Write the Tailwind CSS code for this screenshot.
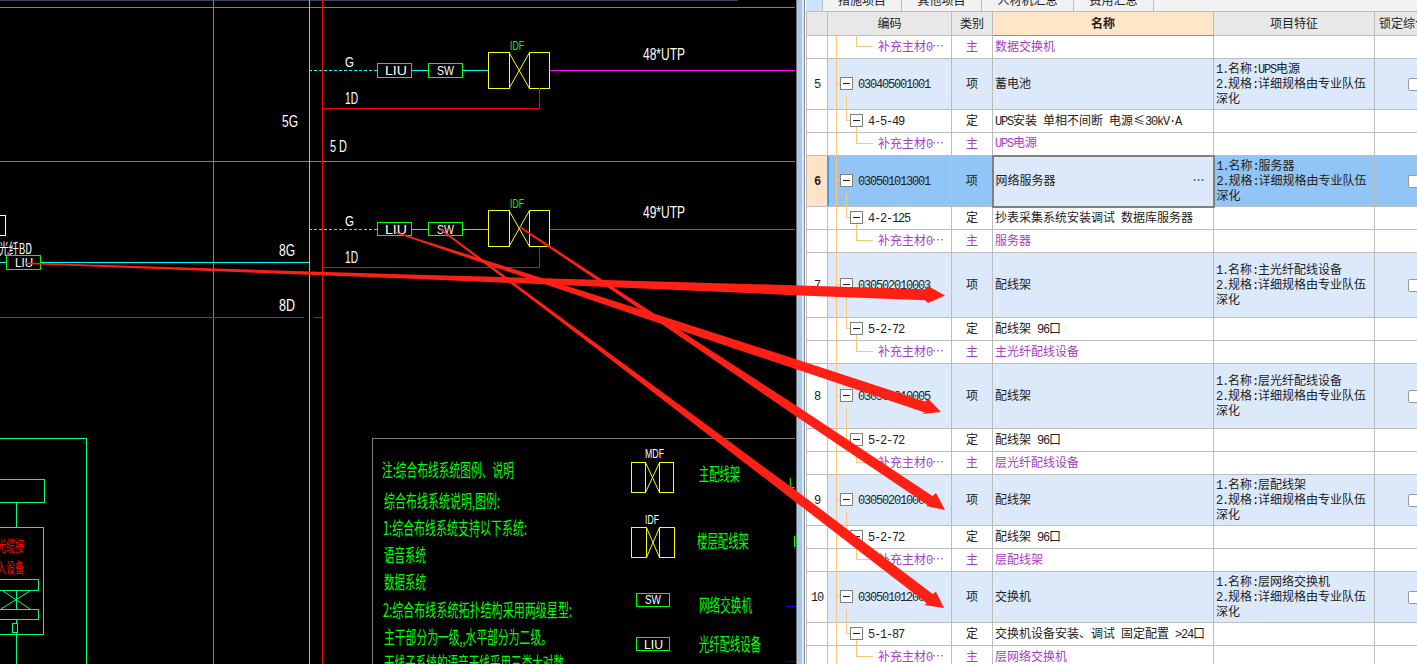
<!DOCTYPE html>
<html lang="zh-CN">
<head>
  <meta charset="UTF-8">
  <title>综合布线 - 清单</title>
  <script src="https://cdn.jsdelivr.net/npm/@tailwindcss/browser@4"></script>
</head>
<body class="relative w-[1417px] h-[664px] overflow-hidden bg-white flex font-['Noto_Sans_CJK_SC',sans-serif] text-[12px] text-[#222]">

  <!-- CAD drawing -->
  <svg class="w-[796px] h-[664px] shrink-0 bg-black" viewBox="0 0 796 664" fill="none" shape-rendering="crispEdges">
    <defs>
      <g id="idf" stroke="#ffff00">
        <rect x="488.5" y="0.5" width="20.5" height="36"/>
        <rect x="529.5" y="0.5" width="20" height="36"/>
        <path d="M509 0.5 529.5 36.5M529.5 0.5 509 36.5" shape-rendering="auto"/>
      </g>
    </defs>

    <!-- frame lines -->
    <path d="M0 0.5H738" stroke="#334466"/>
    <path d="M0 7.5H795M0 161.5H795M213.5 0V664" stroke="#808080"/>
    <path d="M309.5 0V664M0 262.5H309" stroke="#00ffff"/>
    <path d="M322.5 0V664M0 317.5H304M314 317.5H322" stroke="#ff0000"/>

    <!-- floor 5 -->
    <path d="M309 70.5H377" stroke="#00ffff" stroke-dasharray="3 2"/>
    <path d="M411 70.5H428M462 70.5H488" stroke="#00ffff"/>
    <rect x="377.5" y="63.5" width="34" height="14" stroke="#00ff00"/>
    <rect x="428.5" y="63.5" width="34" height="14" stroke="#00ff00"/>
    <use href="#idf" y="52"/>
    <path d="M550 70.5H795" stroke="#ff00ff"/>
    <path d="M323 108.5H539.5V88" stroke="#ff0000"/>

    <!-- floor 8 -->
    <path d="M309 229.5H377" stroke="#00ffff" stroke-dasharray="3 2"/>
    <path d="M411 229.5H428M462 229.5H488" stroke="#00ffff"/>
    <rect x="377.5" y="222.5" width="34" height="13" stroke="#00ff00"/>
    <rect x="428.5" y="222.5" width="34" height="13" stroke="#00ff00"/>
    <use href="#idf" y="210"/>
    <path d="M550 229.5H795" stroke="#ff00ff"/>
    <path d="M323 267.5H539.5V247" stroke="#ff0000"/>

    <g fill="#ffffff" class="font-['Liberation_Sans',sans-serif]">
      <text x="345" y="67" font-size="15" textLength="9" lengthAdjust="spacingAndGlyphs">G</text>
      <text x="345" y="104" font-size="16" textLength="13" lengthAdjust="spacingAndGlyphs">1D</text>
      <text x="282" y="127" font-size="16" textLength="16" lengthAdjust="spacingAndGlyphs">5G</text>
      <text x="330" y="152" font-size="16" textLength="17" lengthAdjust="spacingAndGlyphs">5 D</text>
      <text x="643" y="60" font-size="17" textLength="42" lengthAdjust="spacingAndGlyphs">48*UTP</text>
      <text x="345" y="226" font-size="15" textLength="9" lengthAdjust="spacingAndGlyphs">G</text>
      <text x="345" y="263" font-size="16" textLength="13" lengthAdjust="spacingAndGlyphs">1D</text>
      <text x="279" y="256" font-size="16" textLength="16" lengthAdjust="spacingAndGlyphs">8G</text>
      <text x="279" y="311" font-size="16" textLength="16" lengthAdjust="spacingAndGlyphs">8D</text>
      <text x="643" y="218" font-size="17" textLength="42" lengthAdjust="spacingAndGlyphs">49*UTP</text>
      <text x="385" y="75" font-size="12" textLength="22" lengthAdjust="spacingAndGlyphs">LIU</text>
      <text x="437" y="75" font-size="12" textLength="17" lengthAdjust="spacingAndGlyphs">SW</text>
      <text x="385" y="234" font-size="12" textLength="22" lengthAdjust="spacingAndGlyphs">LIU</text>
      <text x="437" y="234" font-size="12" textLength="17" lengthAdjust="spacingAndGlyphs">SW</text>
      <text x="645" y="458" font-size="13" textLength="19" lengthAdjust="spacingAndGlyphs">MDF</text>
      <text x="645" y="524" font-size="13" textLength="14" lengthAdjust="spacingAndGlyphs">IDF</text>
      <text x="645" y="604" font-size="12" textLength="16" lengthAdjust="spacingAndGlyphs">SW</text>
      <text x="644" y="649" font-size="12" textLength="19" lengthAdjust="spacingAndGlyphs">LIU</text>
    </g>
    <g fill="#00ff00" class="font-['Liberation_Sans',sans-serif]">
      <text x="510" y="50" font-size="13" textLength="14" lengthAdjust="spacingAndGlyphs">IDF</text>
      <text x="510" y="208" font-size="13" textLength="14" lengthAdjust="spacingAndGlyphs">IDF</text>
      <text x="789" y="488" font-size="15" textLength="6" lengthAdjust="spacingAndGlyphs">L</text>
    </g>

    <!-- BD side, left edge -->
    <path d="M0 215.5H5.5V235H0" stroke="#ffffff"/>
    <text x="-1" y="254" fill="#ffffff" font-size="15" textLength="33" lengthAdjust="spacingAndGlyphs">光纤BD</text>
    <rect x="6.5" y="255.5" width="34" height="14" fill="#000" stroke="#00ff00"/>
    <text x="15" y="267" fill="#ffffff" font-size="12" textLength="18" lengthAdjust="spacingAndGlyphs" class="font-['Liberation_Sans',sans-serif]">LIU</text>

    <!-- cabinet, bottom left -->
    <g stroke="#00ff7f">
      <path d="M0 438.5H86.5V664"/>
      <path d="M0 479.5H44.5V502.5H0"/>
      <path d="M16.5 502V527M0 527.5H43.5V634H0"/>
      <path d="M0 579.5H38.5V590H0M0 609.5H38.5V619.5H0"/>
      <path d="M16.5 590V609M3 591 30 609M30 591 1 609" shape-rendering="auto"/>
      <path d="M16.5 619V623M16.5 633V664"/>
      <rect x="12.5" y="623.5" width="5" height="9"/>
    </g>
    <text x="-3" y="551" fill="#ff0000" font-size="15" textLength="27" lengthAdjust="spacingAndGlyphs">光缆接</text>
    <text x="-3" y="573" fill="#ff0000" font-size="15" textLength="27" lengthAdjust="spacingAndGlyphs">入设备</text>

    <!-- legend -->
    <path d="M372.5 664V438.5H795" stroke="#808080"/>
    <g fill="#00ff00" font-size="18">
      <text x="382" y="477" textLength="132" lengthAdjust="spacingAndGlyphs">注:综合布线系统图例、说明</text>
      <text x="384" y="508" textLength="116" lengthAdjust="spacingAndGlyphs">综合布线系统说明,图例:</text>
      <text x="383" y="535" textLength="144" lengthAdjust="spacingAndGlyphs">1:综合布线系统支持以下系统:</text>
      <text x="384" y="562" textLength="42" lengthAdjust="spacingAndGlyphs">语音系统</text>
      <text x="384" y="589" textLength="42" lengthAdjust="spacingAndGlyphs">数据系统</text>
      <text x="383" y="617" textLength="189" lengthAdjust="spacingAndGlyphs">2:综合布线系统拓扑结构采用两级星型:</text>
      <text x="384" y="644" textLength="168" lengthAdjust="spacingAndGlyphs">主干部分为一级,,水平部分为二级。</text>
      <text x="384" y="670" textLength="180" lengthAdjust="spacingAndGlyphs">干线子系统的语音干线采用三类大对数</text>
      <text x="699" y="481" textLength="41" lengthAdjust="spacingAndGlyphs">主配线架</text>
      <text x="697" y="548" textLength="52" lengthAdjust="spacingAndGlyphs">楼层配线架</text>
      <text x="699" y="612" textLength="53" lengthAdjust="spacingAndGlyphs">网络交换机</text>
      <text x="699" y="651" textLength="62" lengthAdjust="spacingAndGlyphs">光纤配线设备</text>
    </g>
    <g stroke="#ffff00">
      <path d="M631.5 462.5H645.5V492.5H631.5ZM659.5 462.5H673.5V492.5H659.5Z"/>
      <path d="M645.5 462.5 659.5 492.5M659.5 462.5 645.5 492.5" shape-rendering="auto"/>
      <path d="M631.5 527.5H646.5V557.5H631.5ZM659.5 527.5H674.5V557.5H659.5Z"/>
      <path d="M646.5 527.5 659.5 557.5M659.5 527.5 646.5 557.5" shape-rendering="auto"/>
    </g>
    <rect x="636.5" y="593.5" width="33" height="13" stroke="#00ff00"/>
    <rect x="636.5" y="637.5" width="33" height="13" stroke="#00ff00"/>
    <path d="M794.5 536V547" stroke="#00ff00"/>
    <path d="M786 606.5H796M786 661.5H796" stroke="#0000ff"/>
  </svg>

  <!-- splitter -->
  <div class="w-[10px] h-full shrink-0 flex">
    <div class="w-px bg-[#777777]"></div>
    <div class="w-[5px] bg-[#a9c9ea]"></div>
    <div class="w-[2px] bg-[#dbe8f6]"></div>
    <div class="w-px bg-[#8a8a8a]"></div>
    <div class="w-px bg-white"></div>
  </div>

  <!-- bill of quantities -->
  <div class="flex-1 min-w-0 overflow-hidden">
    <div class="h-[11px] flex overflow-hidden bg-[#f2f2f2] leading-[0px] text-center">
      <div class="w-[16px] bg-[#cce4fb]"></div>
      <div class="w-[80px] border-x border-[#bdbdbd]">措施项目</div>
      <div class="w-[80px] border-r border-[#bdbdbd]">其他项目</div>
      <div class="w-[92px] border-r border-[#bdbdbd]">人材机汇总</div>
      <div class="w-[80px] border-r border-[#bdbdbd]">费用汇总</div>
    </div>
    <table class="table-fixed border-collapse w-[648px] leading-[14px] [&_td]:border [&_td]:border-[#bdbdbd] [&_td]:pb-[2px] [&_th]:border [&_th]:border-[#bdbdbd] [&_th]:pb-[2px] [&_code]:font-['Liberation_Mono',monospace] [&_code]:text-[12px] [&_code]:tracking-[-1.2px] [&_code]:leading-none">
      <colgroup>
        <col class="w-[21px]">
        <col class="w-[124px]">
        <col class="w-[41px]">
        <col class="w-[221px]">
        <col class="w-[161px]">
        <col class="w-[80px]">
      </colgroup>
      <thead>
        <tr class="h-[24px] bg-[#e8e8e8] font-normal">
          <th></th>
          <th class="font-normal">编码</th>
          <th class="font-normal">类别</th>
          <th class="font-bold bg-[#ffe6c8] border-b-2 border-b-[#4a9ff5]!">名称</th>
          <th class="font-normal">项目特征</th>
          <th class="font-normal text-left pl-1 whitespace-nowrap overflow-hidden">锁定综合单价</th>
        </tr>
      </thead>
      <tbody>
        <tr class="h-[23px] text-[#a63cc6]">
          <td></td>
          <td class="pl-[50px] whitespace-nowrap">补充主材<code>0</code>⋯</td>
          <td class="text-center">主</td>
          <td class="px-[2px]">数据交换机</td>
          <td></td>
          <td></td>
        </tr>
        <tr class="h-[51px]">
          <td class="text-center"><code>5</code></td>
          <td class="pl-[30px] bg-[#dce9fb]"><code>030405001001</code></td>
          <td class="text-center bg-[#dce9fb]">项</td>
          <td class="px-[2px] bg-[#dce9fb]">蓄电池</td>
          <td class="px-[2px] bg-[#dce9fb]"><code>1.</code>名称<code>:UPS</code>电源<br><code>2.</code>规格<code>:</code>详细规格由专业队伍深化</td>
          <td class="text-center bg-[#dce9fb]"><span class="inline-block align-middle w-[13px] h-[13px] bg-white border border-[#999999] rounded-[2px]"></span></td>
        </tr>
        <tr class="h-[23px]">
          <td></td>
          <td class="pl-[40px]"><code>4-5-49</code></td>
          <td class="text-center">定</td>
          <td class="px-[2px] whitespace-nowrap"><code>UPS</code>安装<code> </code>单相不间断<code> </code>电源≤<code>30kV·A</code></td>
          <td></td>
          <td></td>
        </tr>
        <tr class="h-[23px] text-[#a63cc6]">
          <td></td>
          <td class="pl-[50px] whitespace-nowrap">补充主材<code>0</code>⋯</td>
          <td class="text-center">主</td>
          <td class="px-[2px]"><code>UPS</code>电源</td>
          <td></td>
          <td></td>
        </tr>
        <tr class="h-[51px] bg-[#90c5f5]">
          <td class="text-center font-bold bg-[#ffe3c4]"><code>6</code></td>
          <td class="pl-[30px]"><code>030501013001</code></td>
          <td class="text-center">项</td>
          <td class="px-[2px] bg-[#dce9fb] border-2! border-[#808080]!">
            <div class="flex justify-between pr-[6px]"><span>网络服务器</span><span class="text-[#2b7fc4] font-bold">⋯</span></div>
          </td>
          <td class="px-[2px]"><code>1.</code>名称<code>:</code>服务器<br><code>2.</code>规格<code>:</code>详细规格由专业队伍深化</td>
          <td class="text-center"><span class="inline-block align-middle w-[13px] h-[13px] bg-white border border-[#999999] rounded-[2px]"></span></td>
        </tr>
        <tr class="h-[23px]">
          <td></td>
          <td class="pl-[40px]"><code>4-2-125</code></td>
          <td class="text-center">定</td>
          <td class="px-[2px] whitespace-nowrap">抄表采集系统安装调试<code> </code>数据库服务器</td>
          <td></td>
          <td></td>
        </tr>
        <tr class="h-[23px] text-[#a63cc6]">
          <td></td>
          <td class="pl-[50px] whitespace-nowrap">补充主材<code>0</code>⋯</td>
          <td class="text-center">主</td>
          <td class="px-[2px]">服务器</td>
          <td></td>
          <td></td>
        </tr>
        <tr class="h-[65px]">
          <td class="text-center"><code>7</code></td>
          <td class="pl-[30px] bg-[#dce9fb]"><code>030502010003</code></td>
          <td class="text-center bg-[#dce9fb]">项</td>
          <td class="px-[2px] bg-[#dce9fb]">配线架</td>
          <td class="px-[2px] bg-[#dce9fb]"><code>1.</code>名称<code>:</code>主光纤配线设备<br><code>2.</code>规格<code>:</code>详细规格由专业队伍深化</td>
          <td class="text-center bg-[#dce9fb]"><span class="inline-block align-middle w-[13px] h-[13px] bg-white border border-[#999999] rounded-[2px]"></span></td>
        </tr>
        <tr class="h-[23px]">
          <td></td>
          <td class="pl-[40px]"><code>5-2-72</code></td>
          <td class="text-center">定</td>
          <td class="px-[2px]">配线架<code> 96</code>口</td>
          <td></td>
          <td></td>
        </tr>
        <tr class="h-[23px] text-[#a63cc6]">
          <td></td>
          <td class="pl-[50px] whitespace-nowrap">补充主材<code>0</code>⋯</td>
          <td class="text-center">主</td>
          <td class="px-[2px]">主光纤配线设备</td>
          <td></td>
          <td></td>
        </tr>
        <tr class="h-[65px]">
          <td class="text-center"><code>8</code></td>
          <td class="pl-[30px] bg-[#dce9fb]"><code>030502010005</code></td>
          <td class="text-center bg-[#dce9fb]">项</td>
          <td class="px-[2px] bg-[#dce9fb]">配线架</td>
          <td class="px-[2px] bg-[#dce9fb]"><code>1.</code>名称<code>:</code>层光纤配线设备<br><code>2.</code>规格<code>:</code>详细规格由专业队伍深化</td>
          <td class="text-center bg-[#dce9fb]"><span class="inline-block align-middle w-[13px] h-[13px] bg-white border border-[#999999] rounded-[2px]"></span></td>
        </tr>
        <tr class="h-[23px]">
          <td></td>
          <td class="pl-[40px]"><code>5-2-72</code></td>
          <td class="text-center">定</td>
          <td class="px-[2px]">配线架<code> 96</code>口</td>
          <td></td>
          <td></td>
        </tr>
        <tr class="h-[23px] text-[#a63cc6]">
          <td></td>
          <td class="pl-[50px] whitespace-nowrap">补充主材<code>0</code>⋯</td>
          <td class="text-center">主</td>
          <td class="px-[2px]">层光纤配线设备</td>
          <td></td>
          <td></td>
        </tr>
        <tr class="h-[51px]">
          <td class="text-center"><code>9</code></td>
          <td class="pl-[30px] bg-[#dce9fb]"><code>030502010007</code></td>
          <td class="text-center bg-[#dce9fb]">项</td>
          <td class="px-[2px] bg-[#dce9fb]">配线架</td>
          <td class="px-[2px] bg-[#dce9fb]"><code>1.</code>名称<code>:</code>层配线架<br><code>2.</code>规格<code>:</code>详细规格由专业队伍深化</td>
          <td class="text-center bg-[#dce9fb]"><span class="inline-block align-middle w-[13px] h-[13px] bg-white border border-[#999999] rounded-[2px]"></span></td>
        </tr>
        <tr class="h-[23px]">
          <td></td>
          <td class="pl-[40px]"><code>5-2-72</code></td>
          <td class="text-center">定</td>
          <td class="px-[2px]">配线架<code> 96</code>口</td>
          <td></td>
          <td></td>
        </tr>
        <tr class="h-[23px] text-[#a63cc6]">
          <td></td>
          <td class="pl-[50px] whitespace-nowrap">补充主材<code>0</code>⋯</td>
          <td class="text-center">主</td>
          <td class="px-[2px]">层配线架</td>
          <td></td>
          <td></td>
        </tr>
        <tr class="h-[51px]">
          <td class="text-center"><code>10</code></td>
          <td class="pl-[30px] bg-[#dce9fb]"><code>030501012001</code></td>
          <td class="text-center bg-[#dce9fb]">项</td>
          <td class="px-[2px] bg-[#dce9fb]">交换机</td>
          <td class="px-[2px] bg-[#dce9fb]"><code>1.</code>名称<code>:</code>层网络交换机<br><code>2.</code>规格<code>:</code>详细规格由专业队伍深化</td>
          <td class="text-center bg-[#dce9fb]"><span class="inline-block align-middle w-[13px] h-[13px] bg-white border border-[#999999] rounded-[2px]"></span></td>
        </tr>
        <tr class="h-[23px]">
          <td></td>
          <td class="pl-[40px]"><code>5-1-87</code></td>
          <td class="text-center">定</td>
          <td class="px-[2px] whitespace-nowrap">交换机设备安装、调试<code> </code>固定配置<code> &gt;24</code>口</td>
          <td></td>
          <td></td>
        </tr>
        <tr class="h-[23px] text-[#a63cc6]">
          <td></td>
          <td class="pl-[50px] whitespace-nowrap">补充主材<code>0</code>⋯</td>
          <td class="text-center">主</td>
          <td class="px-[2px]">层网络交换机</td>
          <td></td>
          <td></td>
        </tr>
      </tbody>
    </table>
  </div>

  <!-- tree guides and the red annotation arrows lie over everything -->
  <svg class="absolute inset-0 w-[1417px] h-[664px] pointer-events-none" viewBox="0 0 1417 664" fill="none">
    <defs>
      <g id="node">
        <rect x="0.5" y="0.5" width="12" height="12" fill="#ffffff" stroke="#808080"/>
        <path d="M3 6.5H10" stroke="#222222"/>
      </g>
    </defs>
    <rect x="827" y="156" width="2" height="50" fill="#4a9ff5"/>
    <g stroke="#fdc77a" shape-rendering="crispEdges">
      <path d="M836.5 35V664"/>
      <path d="M856.5 35V46.5H873"/>
      <path d="M836 83.5H840M846.5 96V120.5H850M856.5 127V143.5H873"/>
      <path d="M836 180.5H840M846.5 193V217.5H850M856.5 224V240.5H873"/>
      <path d="M836 284.5H840M846.5 297V328.5H850M856.5 335V351.5H873"/>
      <path d="M836 395.5H840M846.5 408V439.5H850M856.5 446V462.5H873"/>
      <path d="M836 499.5H840M846.5 512V536.5H850M856.5 543V559.5H873"/>
      <path d="M836 596.5H840M846.5 609V633.5H850M856.5 640V656.5H873"/>
    </g>
    <use href="#node" x="840" y="77"/>
    <use href="#node" x="850" y="114"/>
    <use href="#node" x="840" y="174"/>
    <use href="#node" x="850" y="211"/>
    <use href="#node" x="840" y="278"/>
    <use href="#node" x="850" y="322"/>
    <use href="#node" x="840" y="389"/>
    <use href="#node" x="850" y="433"/>
    <use href="#node" x="840" y="493"/>
    <use href="#node" x="850" y="530"/>
    <use href="#node" x="840" y="590"/>
    <use href="#node" x="850" y="627"/>

    <g fill="#ff2015">
      <polygon points="25,262.5 400,274.2 800,285.4 925,289.3 928,286 945,295.5 928,303 925,300.3 800,295.4 400,278.2 25,264"/>
      <polygon points="395,231.5 660,315.5 800,360.6 925,401.4 928.6,399 941,412 922,414 925,412.4 800,370.6 660,323.5 395,233"/>
      <polygon points="520,226 650,311 800,408 932.5,496 936,493 945,510 926,506 927.5,505 800,419 650,316 519,227.5"/>
      <polygon points="441,228.5 600,346.3 800,493.4 932.7,594 936,591.7 944,608 924,605 927,603.5 800,505.4 600,351.3 440,230"/>
    </g>
  </svg>
</body>
</html>
